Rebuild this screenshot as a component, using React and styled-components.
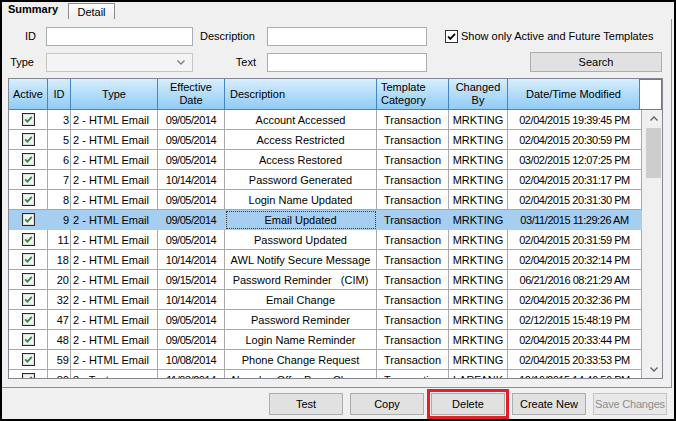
import styled, { createGlobalStyle } from 'styled-components';

const GlobalStyle = createGlobalStyle`
  html, body {
    margin: 0;
    padding: 0;
    background: #fff;
  }
  body {
    font-family: "Liberation Sans", Arial, sans-serif;
    font-size: 11px;
    color: #000;
  }
  * { box-sizing: border-box; }
`;

const Window = styled.div`
  width: 676px;
  height: 421px;
  border: 2px solid #000;
  background: #f0f0f0;
  display: flex;
  flex-direction: column;
  overflow: hidden;
`;

const TabStrip = styled.div`
  display: flex;
  align-items: flex-start;
  height: 17px;
  flex-shrink: 0;
`;

const Tab = styled.div`
  height: ${(p) => (p.$active ? 17 : 16)}px;
  margin-top: ${(p) => (p.$active ? 0 : 1)}px;
  width: ${(p) => p.$w}px;
  padding-left: ${(p) => (p.$active ? 6 : 0)}px;
  text-align: ${(p) => (p.$active ? 'left' : 'center')};
  line-height: ${(p) => (p.$active ? 15 : 16)}px;
  font-weight: ${(p) => (p.$active ? 700 : 400)};
  background: ${(p) => (p.$active ? 'transparent' : 'linear-gradient(#fdfdfd, #efefef)')};
  border: ${(p) => (p.$active ? 'none' : '1px solid #8c8e94')};
  border-bottom: none;
`;

const Panel = styled.div`
  height: 369px;
  flex-shrink: 0;
  margin-right: 2px;
  border-right: 1px solid #8f8f8f;
  border-bottom: 1px solid #8f8f8f;
  padding-top: 7px;
  display: flex;
  flex-direction: column;
`;

const Filters = styled.div`
  display: grid;
  grid-template-columns: 44px 147px 74px 160px 1fr;
  grid-template-rows: 20px 20px;
  row-gap: 6px;
  align-items: center;
`;

const Label = styled.div`
  text-align: right;
  padding-right: ${(p) => p.$pr}px;
`;

const TextBox = styled.div`
  height: 19px;
  background: #fff;
  border: 1px solid #abadb3;
`;

const Select = styled.div`
  height: 19px;
  background: #f4f4f4;
  border: 1px solid #c6c6c6;
  display: flex;
  align-items: center;
  justify-content: flex-end;
  padding-right: 7px;
`;

const CheckRow = styled.label`
  display: flex;
  align-items: center;
  gap: 3px;
  padding-left: 18px;
  white-space: nowrap;
`;

const Button = styled.div`
  width: ${(p) => p.$w || 74}px;
  height: ${(p) => p.$h || 22}px;
  display: flex;
  align-items: center;
  justify-content: center;
  white-space: nowrap;
  letter-spacing: ${(p) => (p.$disabled ? '-0.2px' : '0')};
  background: ${(p) => (p.$disabled ? '#e8e8e8' : '#e1e1e1')};
  border: 1px solid ${(p) => (p.$disabled ? '#c4c4c4' : '#adadad')};
  color: ${(p) => (p.$disabled ? '#8d8d8d' : '#000')};
  outline: ${(p) => (p.$marked ? '3px solid #e3202a' : 'none')};
  outline-offset: 1px;
`;

const SearchButton = styled(Button)`
  justify-self: end;
  margin-right: 9px;
`;

const Grid = styled.div`
  margin: 6px 0 0 6px;
  width: 655px;
  height: 301px;
  border: 1px solid #828790;
  background: #fff;
  display: flex;
  flex-direction: column;
  overflow: hidden;
`;

const HeaderRow = styled.div`
  display: flex;
  height: 31px;
  flex-shrink: 0;
`;

const HeaderCell = styled.div`
  width: ${(p) => p.$w}px;
  flex-shrink: 0;
  height: 31px;
  display: flex;
  align-items: center;
  justify-content: ${(p) => (p.$align === 'left' ? 'flex-start' : 'center')};
  text-align: ${(p) => p.$align || 'center'};
  padding-left: ${(p) => (p.$align === 'left' ? p.$pl : 0)}px;
  line-height: 13px;
  white-space: pre;
  background: linear-gradient(#d8eefd 0%, #b6defa 45%, #92cbf5 100%);
  border-right: 1px solid #4586c2;
  border-bottom: 1px solid #4586c2;
`;

const Corner = styled.div`
  flex: 1;
  height: 31px;
  background: #fff;
  border: 1px solid #4586c2;
  border-left: none;
`;

const Body = styled.div`
  flex: 1;
  display: flex;
  overflow: hidden;
`;

const Rows = styled.div`
  width: 633px;
  flex-shrink: 0;
`;

const Row = styled.div`
  display: flex;
  height: 20px;
  background: ${(p) => (p.$selected ? '#a6cef0' : '#fff')};
`;

const Cell = styled.div`
  width: ${(p) => p.$w}px;
  flex-shrink: 0;
  height: 20px;
  display: flex;
  align-items: center;
  justify-content: ${(p) =>
    p.$align === 'right' ? 'flex-end' : p.$align === 'left' ? 'flex-start' : 'center'};
  padding: 0 ${(p) => (p.$align === 'right' ? 1 : 0)}px 0 ${(p) => (p.$align === 'left' ? 2 : 0)}px;
  white-space: pre;
  overflow: hidden;
  letter-spacing: ${(p) => (p.$date ? '-0.45px' : '0')};
  border-right: 1px solid ${(p) => (p.$selected ? 'transparent' : '#a9a9a9')};
  border-bottom: 1px solid ${(p) => (p.$selected ? 'transparent' : '#a9a9a9')};
  outline: ${(p) => (p.$focus ? '1px dotted #3a3a3a' : 'none')};
  outline-offset: -2px;
`;

const ScrollBar = styled.div`
  flex: 1;
  background: #f0f0f0;
  display: flex;
  flex-direction: column;
`;

const ScrollArrow = styled.div`
  height: 17px;
  display: flex;
  align-items: center;
  justify-content: center;
  padding-left: 4px;
`;

const Thumb = styled.div`
  margin: 1px 1px 0 4px;
  height: 50px;
  background: #cdcdcd;
`;

const Track = styled.div`
  flex: 1;
`;

const Footer = styled.div`
  flex: 1;
  display: flex;
  justify-content: flex-end;
  gap: 7px;
  padding: 5px 7px 0 0;
`;

const Chevron = ({ up, color = '#606060' }) => (
  <svg width="8" height="5" viewBox="0 0 8 5">
    <path
      d={up ? 'M0.5 4.5 L4 1 L7.5 4.5' : 'M0.5 0.5 L4 4 L7.5 0.5'}
      fill="none"
      stroke={color}
      strokeWidth="1.3"
    />
  </svg>
);

const GridCheck = () => (
  <svg width="13" height="13" viewBox="0 0 13 13">
    <rect x="0.5" y="0.5" width="12" height="12" fill="#fff" stroke="#2b2b2b" />
    <rect x="1.5" y="1.5" width="10" height="10" fill="#f3f3f3" stroke="#dcdcdc" />
    <path d="M3.2 6.4 L5.4 8.7 L9.8 3.9" fill="none" stroke="#2e8b35" strokeWidth="1.8" />
  </svg>
);

const FilterCheck = () => (
  <svg width="13" height="13" viewBox="0 0 13 13">
    <rect x="0.5" y="0.5" width="12" height="12" fill="#fff" stroke="#333" />
    <path d="M3 6.5 L5.3 8.9 L10 3.8" fill="none" stroke="#000" strokeWidth="1.8" />
  </svg>
);

const columns = [
  { key: 'active', w: 39, label: 'Active' },
  { key: 'id', w: 23, label: 'ID', align: 'right' },
  { key: 'type', w: 87, label: 'Type', align: 'left' },
  { key: 'eff', w: 67, label: 'Effective\nDate', date: true },
  { key: 'desc', w: 152, label: 'Description', head: 'left', pl: 5 },
  { key: 'cat', w: 72, label: 'Template\nCategory', head: 'left', pl: 4 },
  { key: 'by', w: 59, label: 'Changed\nBy' },
  { key: 'mod', w: 132, bodyW: 134, label: 'Date/Time Modified', date: true },
];

const html = '2 - HTML Email';
const rows = [
  ['3', html, '09/05/2014', 'Account Accessed', 'MRKTING', '02/04/2015 19:39:45 PM'],
  ['5', html, '09/05/2014', 'Access Restricted', 'MRKTING', '02/04/2015 20:30:59 PM'],
  ['6', html, '09/05/2014', 'Access Restored', 'MRKTING', '03/02/2015 12:07:25 PM'],
  ['7', html, '10/14/2014', 'Password Generated', 'MRKTING', '02/04/2015 20:31:17 PM'],
  ['8', html, '09/05/2014', 'Login Name Updated', 'MRKTING', '02/04/2015 20:31:30 PM'],
  ['9', html, '09/05/2014', 'Email Updated', 'MRKTING', '03/11/2015 11:29:26 AM'],
  ['11', html, '09/05/2014', 'Password Updated', 'MRKTING', '02/04/2015 20:31:59 PM'],
  ['18', html, '10/14/2014', 'AWL Notify Secure Message', 'MRKTING', '02/04/2015 20:32:14 PM'],
  ['20', html, '09/15/2014', 'Password Reminder   (CIM)', 'MRKTING', '06/21/2016 08:21:29 AM'],
  ['32', html, '10/14/2014', 'Email Change', 'MRKTING', '02/04/2015 20:32:36 PM'],
  ['47', html, '09/05/2014', 'Password Reminder', 'MRKTING', '02/12/2015 15:48:19 PM'],
  ['48', html, '09/05/2014', 'Login Name Reminder', 'MRKTING', '02/04/2015 20:33:44 PM'],
  ['59', html, '10/08/2014', 'Phone Change Request', 'MRKTING', '02/04/2015 20:33:53 PM'],
  ['80', '3 - Text', '11/03/2014', 'Abandon Offer Page Change', 'LARFANK', '12/16/2015 14:46:56 PM'],
].map(([id, type, eff, desc, by, mod]) => ({ id, type, eff, desc, cat: 'Transaction', by, mod }));

const SELECTED = '9';

export default function App() {
  return (
    <Window>
      <GlobalStyle />
      <TabStrip>
        <Tab $active $w={66}>Summary</Tab>
        <Tab $w={47}>Detail</Tab>
      </TabStrip>

      <Panel>
        <Filters>
          <Label $pr={10}>ID</Label>
          <TextBox />
          <Label $pr={12}>Description</Label>
          <TextBox />
          <CheckRow>
            <FilterCheck />
            Show only Active and Future Templates
          </CheckRow>

          <Label $pr={12}>Type</Label>
          <Select>
            <Chevron color="#7a7a7a" />
          </Select>
          <Label $pr={11}>Text</Label>
          <TextBox />
          <SearchButton $w={132} $h={20}>Search</SearchButton>
        </Filters>

        <Grid>
          <HeaderRow>
            {columns.map((c) => (
              <HeaderCell key={c.key} $w={c.w} $align={c.head} $pl={c.pl}>
                {c.label}
              </HeaderCell>
            ))}
            <Corner />
          </HeaderRow>
          <Body>
            <Rows>
              {rows.map((r) => {
                const sel = r.id === SELECTED;
                return (
                  <Row key={r.id} $selected={sel}>
                    {columns.map((c) => (
                      <Cell
                        key={c.key}
                        $w={c.bodyW || c.w}
                        $align={c.align}
                        $date={c.date}
                        $selected={sel}
                        $focus={sel && c.key === 'desc'}
                      >
                        {c.key === 'active' ? <GridCheck /> : r[c.key]}
                      </Cell>
                    ))}
                  </Row>
                );
              })}
            </Rows>
            <ScrollBar>
              <ScrollArrow>
                <Chevron up />
              </ScrollArrow>
              <Thumb />
              <Track />
              <ScrollArrow>
                <Chevron />
              </ScrollArrow>
            </ScrollBar>
          </Body>
        </Grid>
      </Panel>

      <Footer>
        <Button>Test</Button>
        <Button>Copy</Button>
        <Button $marked>Delete</Button>
        <Button>Create New</Button>
        <Button $disabled>Save Changes</Button>
      </Footer>
    </Window>
  );
}
